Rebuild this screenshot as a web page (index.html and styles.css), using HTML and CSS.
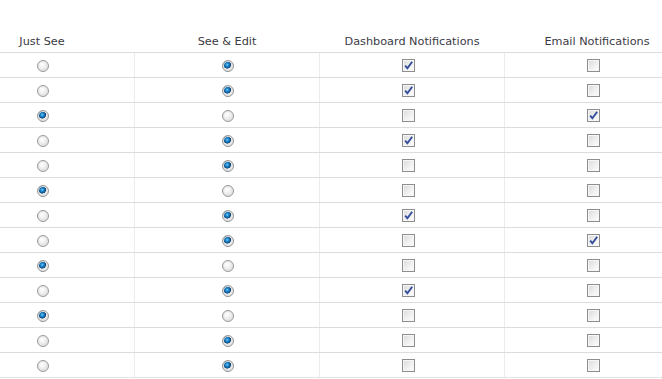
FILE: index.html
```html
<!DOCTYPE html>
<html lang="en">
<head>
    <meta charset="UTF-8">
    <title>Permissions</title>
    <link rel="stylesheet" href="styles.css">
</head>
<body>
    <table class="perm-table">
        <thead>
            <tr>
                <th>Just See</th>
                <th>See &amp; Edit</th>
                <th>Dashboard Notifications</th>
                <th>Email Notifications</th>
            </tr>
        </thead>
        <tbody>
            <tr><td><input type="radio" name="r1"></td><td><input type="radio" name="r1" checked></td><td><input type="checkbox" checked></td><td><input type="checkbox"></td></tr>
            <tr><td><input type="radio" name="r2"></td><td><input type="radio" name="r2" checked></td><td><input type="checkbox" checked></td><td><input type="checkbox"></td></tr>
            <tr><td><input type="radio" name="r3" checked></td><td><input type="radio" name="r3"></td><td><input type="checkbox"></td><td><input type="checkbox" checked></td></tr>
            <tr><td><input type="radio" name="r4"></td><td><input type="radio" name="r4" checked></td><td><input type="checkbox" checked></td><td><input type="checkbox"></td></tr>
            <tr><td><input type="radio" name="r5"></td><td><input type="radio" name="r5" checked></td><td><input type="checkbox"></td><td><input type="checkbox"></td></tr>
            <tr><td><input type="radio" name="r6" checked></td><td><input type="radio" name="r6"></td><td><input type="checkbox"></td><td><input type="checkbox"></td></tr>
            <tr><td><input type="radio" name="r7"></td><td><input type="radio" name="r7" checked></td><td><input type="checkbox" checked></td><td><input type="checkbox"></td></tr>
            <tr><td><input type="radio" name="r8"></td><td><input type="radio" name="r8" checked></td><td><input type="checkbox"></td><td><input type="checkbox" checked></td></tr>
            <tr><td><input type="radio" name="r9" checked></td><td><input type="radio" name="r9"></td><td><input type="checkbox"></td><td><input type="checkbox"></td></tr>
            <tr><td><input type="radio" name="r10"></td><td><input type="radio" name="r10" checked></td><td><input type="checkbox" checked></td><td><input type="checkbox"></td></tr>
            <tr><td><input type="radio" name="r11" checked></td><td><input type="radio" name="r11"></td><td><input type="checkbox"></td><td><input type="checkbox"></td></tr>
            <tr><td><input type="radio" name="r12"></td><td><input type="radio" name="r12" checked></td><td><input type="checkbox"></td><td><input type="checkbox"></td></tr>
            <tr><td><input type="radio" name="r13"></td><td><input type="radio" name="r13" checked></td><td><input type="checkbox"></td><td><input type="checkbox"></td></tr>
        </tbody>
    </table>
</body>
</html>
```

FILE: styles.css
```css
body {
    margin: 0;
    background: #fff;
    font-family: 'DejaVu Sans', Verdana, sans-serif;
    overflow: hidden;
}

.perm-table {
    border-collapse: collapse;
    table-layout: fixed;
    width: 740px;
    margin-left: -51px;
}

.perm-table th {
    width: 185px;
    height: 48px;
    padding: 0 0 4px;
    vertical-align: bottom;
    font-size: 11.25px;
    font-weight: normal;
    color: #3a3a44;
    border-bottom: 1px solid #dcdcdc;
}

.perm-table td {
    height: 24px;
    padding: 0;
    vertical-align: middle;
    border-bottom: 1px solid #dcdcdc;
    border-left: 1px solid #ececec;
}

.perm-table tbody tr:last-child td {
    border-bottom-color: #e4e4e4;
}

/* Radio buttons */
input[type="radio"] {
    appearance: none;
    -webkit-appearance: none;
    width: 12px;
    height: 12px;
    display: block;
    margin: 1px 0 0 calc(50% - 5px);
    border-radius: 50%;
    border: 1px solid #9a9a9a;
    background: radial-gradient(circle at 40% 35%, #ffffff 0%, #f0f0f0 40%, #cfcfcf 100%);
    box-shadow: inset 0 0 0 1px #e6e6e6;
}

input[type="radio"]:checked {
    background:
        radial-gradient(circle at 42% 38%, #7fd0ff 0, #1f8ad0 1.5px, #0f5d9a 3px, #0a3f6e 3.5px, transparent 4px),
        radial-gradient(circle, #f4f4f4 0%, #d8d8d8 100%);
}

/* Checkboxes */
input[type="checkbox"] {
    appearance: none;
    -webkit-appearance: none;
    width: 13px;
    height: 13px;
    display: block;
    margin: 1px 0 0 calc(50% - 10px);
    border: 1px solid #8e8e8e;
    border-radius: 0;
    background: linear-gradient(135deg, #d8d8d8 0%, #eeeeee 50%, #ffffff 100%);
    box-shadow: inset 0 0 0 1px #f6f6f6;
}

input[type="checkbox"]:checked {
    background:
        url("data:image/svg+xml,%3Csvg xmlns='http://www.w3.org/2000/svg' viewBox='0 0 11 11'%3E%3Cpath d='M2.2 5.6 L4.4 8.3 L9.2 1.8' fill='none' stroke='%23324c9a' stroke-width='1.9'/%3E%3C/svg%3E") center / 11px 11px no-repeat,
        linear-gradient(135deg, #d8d8d8 0%, #eeeeee 50%, #ffffff 100%);
}
```
